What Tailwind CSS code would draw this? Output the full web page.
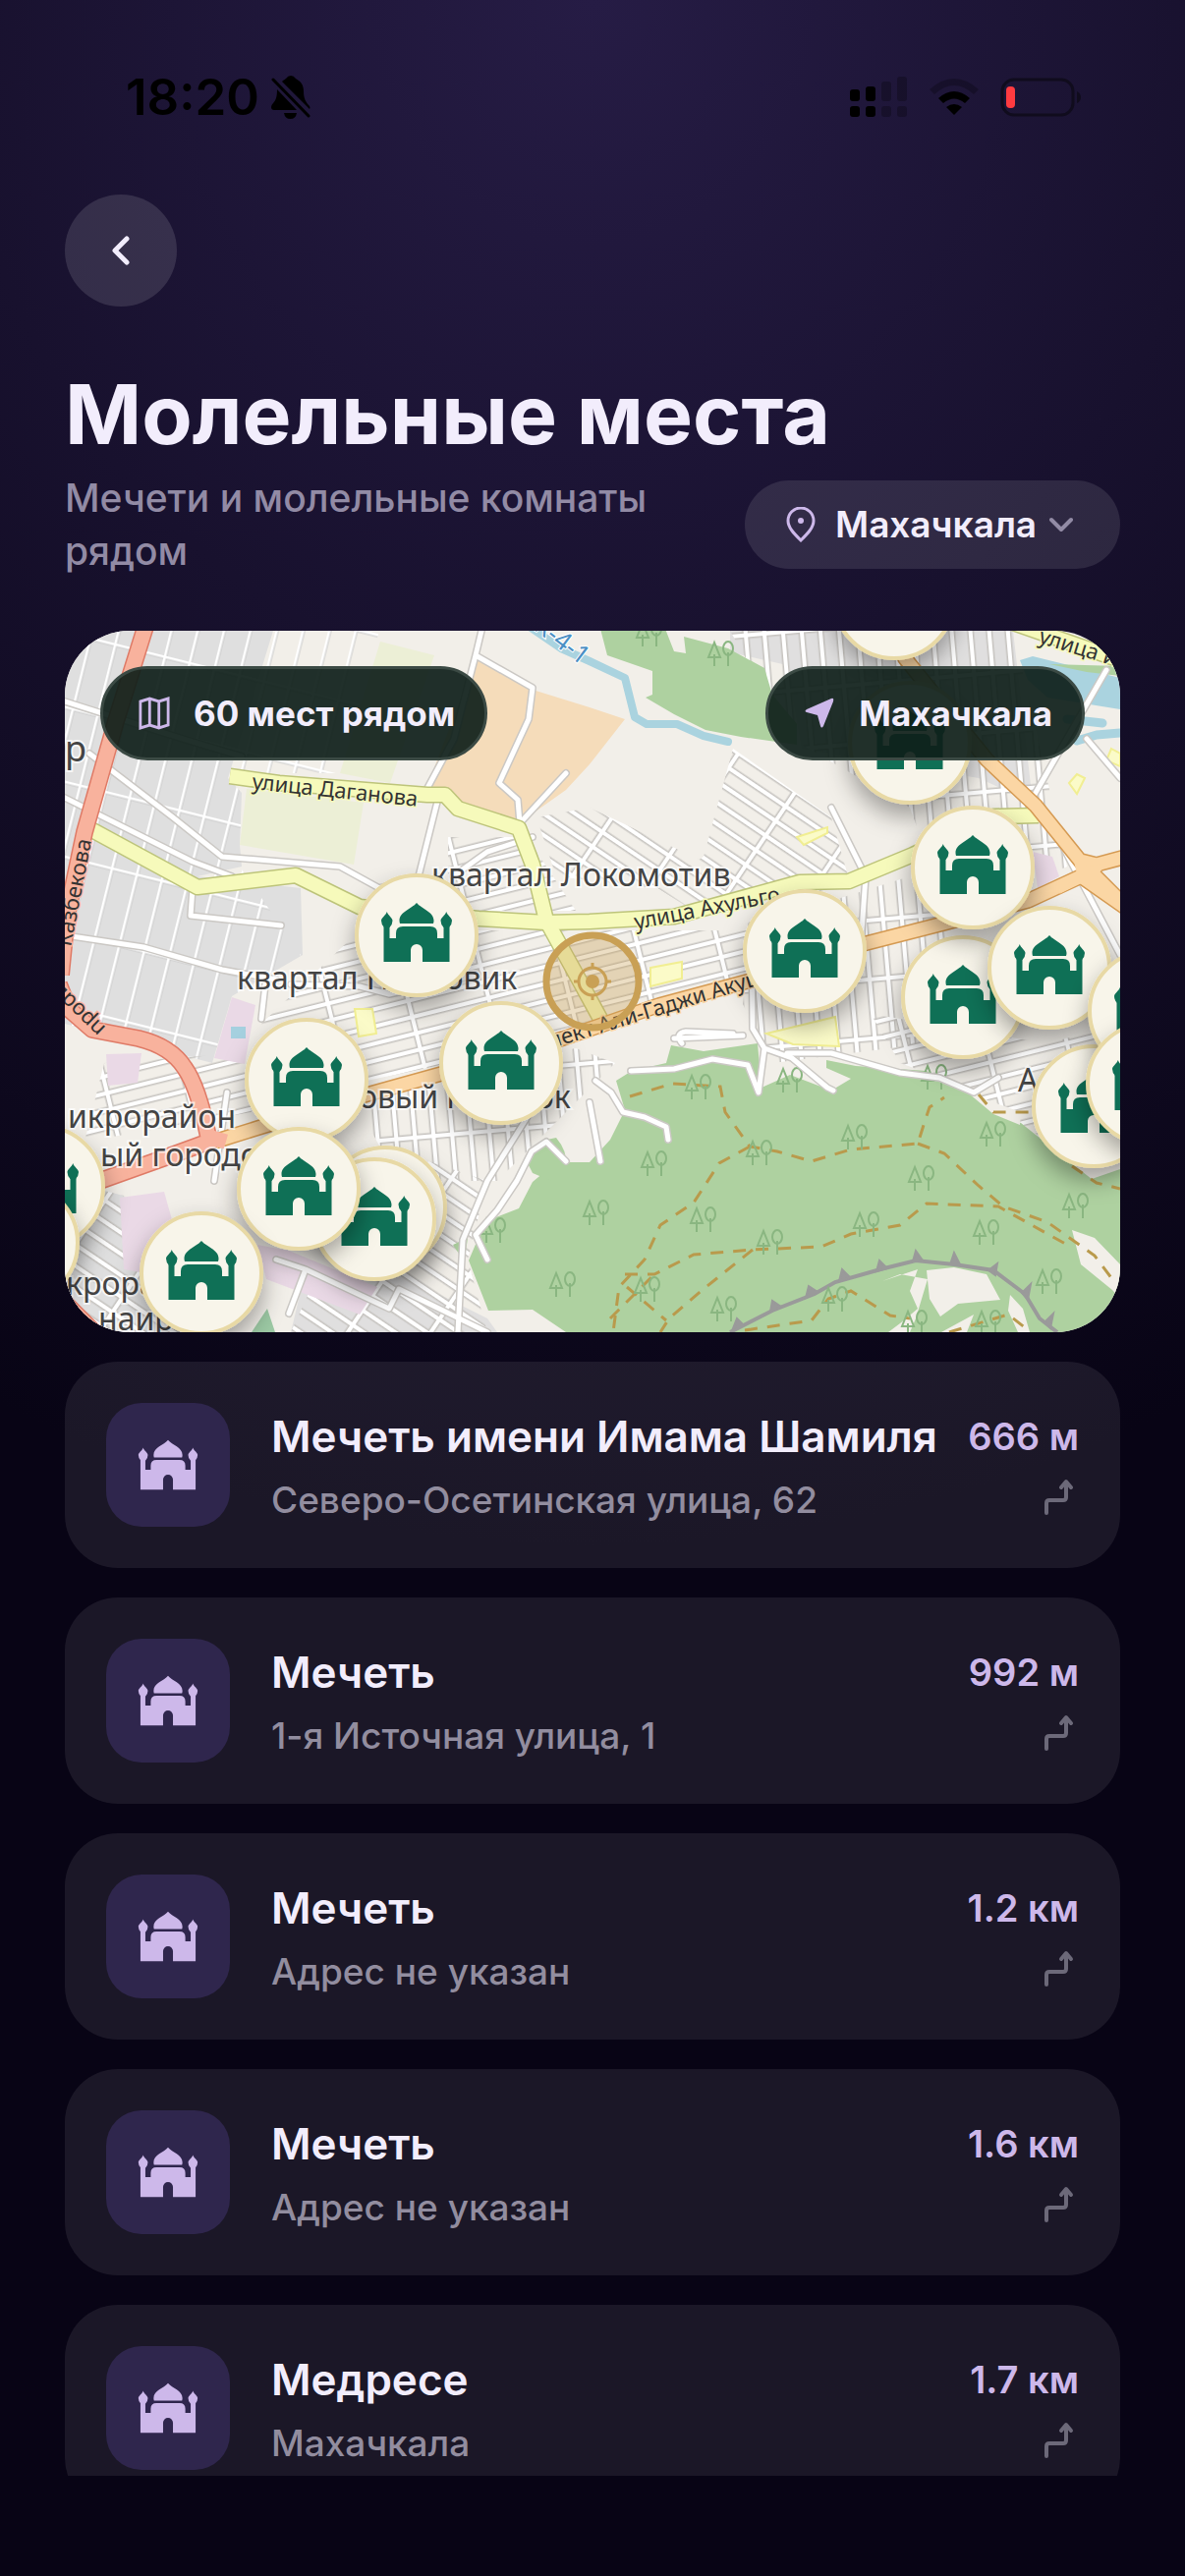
<!DOCTYPE html>
<html lang="ru">

<head>
  <meta charset="UTF-8" />
  <meta name="viewport" content="width=device-width, initial-scale=1.0" />
  <title>Молельные места</title>
  <script src="https://cdn.jsdelivr.net/npm/@tailwindcss/browser@4"></script>
</head>

<body class="h-screen overflow-hidden flex flex-col px-[66px] pb-[102px] text-[#f2edfc] font-['Inter',sans-serif] bg-[#080415] bg-[radial-gradient(120%_60%_at_50%_0%,#261c45_0%,#18112e_45%,#080415_100%)]">

  <!-- Shared icons -->
  <svg class="hidden">
    <symbol id="mosque" viewBox="-37 -34 74 62">
      <path d="M0-33C5-27 17.500-24 17.500-15Q17.500-13.500 17-12H-17Q-17.500-13.500-17.500-15C-17.500-24-5-27 0-33Z" />
      <path d="M-33.500 27V-9H-27.500V3H-21V-2Q-21-9-14-9H14Q21-9 21-2V3H27.500V-9H33.500V27H6V15A6 6 0 0 0-6 15V27Z" />
      <path d="M-30.200-24C-29-20-24.500-18-24.500-15Q-24.500-11-27.500-8H-33Q-36-11-36-15C-36-18-31.500-20-30.200-24Z" />
      <path d="M30.200-24C29-20 24.500-18 24.500-15Q24.500-11 27.500-8H33Q36-11 36-15C36-18 31.500-20 30.200-24Z" />
    </symbol>
    <symbol id="route" viewBox="0 0 32 38">
      <path d="M3 35V25Q3 22 6 22H20Q23 22 23 19V4M18 9L23 3L28 9" fill="none" stroke="currentColor" stroke-width="4" stroke-linecap="round" stroke-linejoin="round" />
    </symbol>
  </svg>

  <!-- Status bar -->
  <div class="flex items-center justify-between h-[198px] shrink-0 pl-[62px] pr-[38px] text-black">
    <div class="flex items-center gap-3">
      <span class="text-[51px] leading-[60px] font-semibold">18:20</span>
      <svg class="w-10 h-11" viewBox="0 0 40 44" fill="currentColor">
        <path d="M11 6C13 4 14 4 15 3Q17 0 20 0Q23 0 25 3C30 6 33 9 33 16C33 23 35 27 39 31Q40 33 39 34Z" />
        <path d="M6 14L26 35H3Q0 35 0 32Q0 30 2 28C5 25 6 21 6 14Z" />
        <path d="M13 38H26Q25 44 19.500 44Q14 44 13 38Z" />
        <path d="M2 4L38 41" stroke="currentColor" stroke-width="3" stroke-linecap="round" />
      </svg>
    </div>
    <div class="flex items-center gap-[22px]">
      <svg class="w-[59px] h-[42px]" viewBox="0 0 59 42">
        <rect x="0" y="13" width="10" height="12" rx="3" />
        <rect x="16" y="10" width="10" height="15" rx="3" />
        <rect x="0" y="30" width="10" height="11" rx="3" />
        <rect x="16" y="30" width="10" height="11" rx="3" />
        <g opacity=".25">
          <rect x="32" y="5" width="10" height="20" rx="3" />
          <rect x="48" y="0" width="10" height="25" rx="3" />
          <rect x="32" y="30" width="10" height="11" rx="3" />
          <rect x="48" y="30" width="10" height="11" rx="3" />
        </g>
      </svg>
      <svg class="w-[50px] h-[38px]" viewBox="0 0 50 38">
        <path d="M0 11Q25-11 50 11L45 16Q25-2 5 16Z" opacity=".25" />
        <path d="M9 20Q25 6 41 20L36 25Q25 16 14 25Z" />
        <path d="M17 29Q25 23 33 29L25 37Z" />
      </svg>
      <svg class="w-[84px] h-10" viewBox="0 0 84 40">
        <rect x="2" y="2" width="72" height="36" rx="12" fill="none" stroke="#100c1d" stroke-width="3" />
        <path d="M78 14Q82 16 82 20Q82 24 78 26Z" fill="#100c1d" />
        <rect x="6" y="9" width="9" height="22" rx="4" fill="#ff3b40" />
      </svg>
    </div>
  </div>

  <header class="shrink-0">
    <button aria-label="Назад" class="flex items-center justify-center size-[114px] rounded-full bg-white/12">
      <svg class="w-5 h-8" viewBox="0 0 20 32" fill="none" stroke="currentColor" stroke-width="5" stroke-linecap="round" stroke-linejoin="round">
        <path d="M16 4L4 16L16 28" />
      </svg>
    </button>
    <h1 class="mt-[60px] text-[84px] leading-[100px] font-bold">Молельные места</h1>
    <div class="flex items-center justify-between gap-6 mt-2">
      <p class="text-[39px] leading-[54px] font-medium text-[#928ba5]">Мечети и молельные комнаты рядом</p>
      <label class="flex items-center shrink-0 h-[90px] pl-[42px] pr-12 rounded-full bg-white/10">
        <svg class="w-[30px] h-9" viewBox="0 0 30 36" fill="none" stroke="#cdb8ea" stroke-width="3">
          <path d="M15 34C8 27 2 21 2 14A13 13 0 0 1 28 14C28 21 22 27 15 34Z" />
          <circle cx="15" cy="14" r="3" fill="#cdb8ea" stroke="none" />
        </svg>
        <select aria-label="Город" class="appearance-none ml-5 mr-3 text-[37px] leading-[48px] font-semibold">
          <option>Махачкала</option>
        </select>
        <svg class="w-6 h-4" viewBox="0 0 24 16" fill="none" stroke="#928ba5" stroke-width="4" stroke-linecap="round" stroke-linejoin="round">
          <path d="M2 3L12 13L22 3" />
        </svg>
      </label>
    </div>
  </header>

  <!-- Map -->
  <section class="relative shrink-0 mt-[54px] overflow-hidden rounded-[66px]">
    <svg class="block w-full font-['Noto_Sans',sans-serif]" viewBox="0 0 1074 714">
      <defs>
        <pattern id="blocks" width="26" height="74" patternUnits="userSpaceOnUse" patternTransform="rotate(14)">
          <path d="M0 0H26M0 0V74" fill="none" stroke="#c9c9c9" stroke-width="7" />
          <path d="M0 0H26M0 0V74" fill="none" stroke="#fff" stroke-width="5" />
        </pattern>
        <pattern id="lanes" width="80" height="17" patternUnits="userSpaceOnUse" patternTransform="rotate(-14)">
          <path d="M0 8H80M8 0V17" fill="none" stroke="#c6c3bf" stroke-width="7" />
          <path d="M0 8H80M8 0V17" fill="none" stroke="#fff" stroke-width="4" />
        </pattern>
        <pattern id="slope" width="70" height="18" patternUnits="userSpaceOnUse" patternTransform="rotate(34)">
          <path d="M0 8H70M8 0V18" fill="none" stroke="#c6c3bf" stroke-width="7" />
          <path d="M0 8H70M8 0V18" fill="none" stroke="#fff" stroke-width="4" />
        </pattern>
        <pattern id="upright" width="19" height="60" patternUnits="userSpaceOnUse" patternTransform="rotate(-5)">
          <path d="M0 5H19M6 0V60" fill="none" stroke="#c6c3bf" stroke-width="7" />
          <path d="M0 5H19M6 0V60" fill="none" stroke="#fff" stroke-width="4" />
        </pattern>
        <g id="trees" fill="none" stroke="#8ab681" stroke-width="2">
          <path d="M-7 12V0M-7-12L-13 3H-1Z" />
          <path d="M7 12V-2" />
          <ellipse cx="7" cy="-6" rx="5" ry="7" />
        </g>
        <filter id="shade" x="-50%" y="-50%" width="200%" height="200%">
          <feDropShadow dx="0" dy="12" stdDeviation="12" flood-color="#000" flood-opacity=".35" />
        </filter>
        <g id="pin">
          <circle r="61" fill="#f8f5ea" stroke="#e8d9a5" stroke-width="4" filter="url(#shade)" />
          <use href="#mosque" x="-37" y="-34" width="74" height="62" fill="#0f7056" />
        </g>
      </defs>

      <!-- Land use -->
      <rect width="1074" height="714" fill="#f2efe9" />
      <path d="M0 0H212L166 150L180 165L178 218L180 240L135 250L240 262L242 330L170 372L150 440L0 400Z" fill="#dfdfdf" />
      <path d="M677 0H965L985 175L930 150L750 120L735 35L677 22Z" fill="#e0dfdf" />
      <path d="M0 560L60 575L90 660L140 714H0Z" fill="#dfdfdf" />
      <path d="M230 714L240 672L330 650L430 700L440 714Z" fill="#e0dfdf" />
      <path d="M0 0H212L166 150L180 165L178 240L240 330L170 372L150 440L0 400Z" fill="url(#blocks)" />
      <path d="M212 0H320L280 145H166Z" fill="url(#blocks)" />
      <path d="M677 0H965L1020 240L900 290L860 180L740 110Z" fill="url(#upright)" />
      <path d="M680 120L780 190L800 260L640 285L600 260L650 230Z" fill="url(#slope)" />
      <path d="M534 180L650 235L600 262L500 250L480 190Z" fill="url(#slope)" />
      <path d="M300 305H760V345L560 400L440 430L250 470L200 400Z" fill="url(#lanes)" />
      <path d="M390 210L470 210L520 285H330L390 250Z" fill="url(#lanes)" />
      <path d="M700 300L860 250L900 300L880 420L720 440L690 380Z" fill="url(#upright)" />
      <path d="M820 390L1000 420L1074 400V540L1000 520L920 465L850 440Z" fill="url(#lanes)" />
      <path d="M40 440L180 430L190 490L20 520Z" fill="url(#lanes)" />
      <path d="M290 470L520 425L560 440L440 560L340 560Z" fill="url(#upright)" />
      <path d="M0 560L60 575L90 660L140 714H0Z" fill="url(#slope)" />
      <path d="M370 540L430 560L410 640L430 714H230L250 670L330 650Z" fill="url(#slope)" />
      <path d="M321 11L376 25L331 155L280 145Z" fill="#ecefd6" />
      <path d="M185 161L304 175L294 238L178 218Z" fill="#ecefd6" />
      <path d="M419 28L476 60L534 78L570 90L534 136L510 162L462 196L400 174L368 160Z" fill="#f5dcba" />
      <g fill="#ead9e6">
        <path d="M170 373L194 381L183 441L152 435Z" />
        <path d="M42 431L78 430L74 460L44 463Z" />
        <path d="M56 577L101 571L112 610L88 655L60 650Z" />
        <path d="M196 625L228 631L318 668L300 696L205 660Z" />
        <path d="M985 225L1005 230L1012 250L990 262Z" />
      </g>
      <g fill="#fbfbc8" stroke="#f1ee92" stroke-width="2">
        <path d="M295 385H313L317 410L299 413Z" />
        <path d="M714 410L784 393L788 423L741 421Z" />
        <path d="M596 343L628 337V354L596 362Z" />
        <path d="M745 210L776 200V206L752 218Z" />
        <path d="M1022 155L1030 146L1038 150L1030 166Z" />
        <path d="M1065 120L1074 125V138L1060 132Z" />
      </g>
      <rect x="169" y="403" width="15" height="12" fill="#a5d0df" />

      <!-- Park -->
      <path d="M545-2H611L620 21L632 23L630 6L675 18L712 38L720 65L745 95V116L688 108L652 101L620 85L591 68L598 65V41L552 25Z" fill="#aed1a0" />
      <path d="M510 714L476 691L431 692L411 641L428 601L462 588L476 561L500 541L534 541L555 518L570 488L561 458L577 448L612 440L617 422L650 428L705 420L709 465L738 452L780 468L800 456L775 445V437L805 443L877 448L920 471L945 488L973 501L1023 541L1045 558L1074 548V714Z" fill="#aed1a0" />
      <path d="M470 540Q475 520 500 516Q512 530 510 545L495 560L476 552Z" fill="#aed1a0" />
      <path d="M190 714L206 690L214 714Z" fill="#9cc9a4" />
      <path d="M395 625L410 618L408 632L403 637Z" fill="#aed1a0" />
      <g fill="#f2efe9">
        <path d="M1025 610L1048 618L1074 645V680L1066 671L1034 645Z" />
        <path d="M877 651L905 648L938 655L952 681L909 685L891 698L880 680Z" />
        <path d="M832 662L868 650L860 672L868 690L850 705L838 714H860L866 700L878 660L850 655Z" />
        <path d="M962 676L975 690L982 714H970L960 692Z" />
        <path d="M892 714L925 696L918 714Z" />
        <path d="M920 471L973 490L972 503L945 492Z" />
      </g>
      <g fill="none" stroke="#b99a4c" stroke-width="3" stroke-dasharray="13 10">
        <path d="M575 474L618 461L667 464L672 490L697 525L725 530L760 540L800 528L868 522L875 500L880 485L895 475" />
        <path d="M697 525L666 542L640 582L606 605L590 640L564 668L558 714" />
        <path d="M570 655L600 655L640 635L700 630L770 627L800 614L850 605L877 583L950 586L1020 625" />
        <path d="M868 522L895 532L930 565L955 586L1000 602L1048 636L1066 660" />
        <path d="M555 700L600 655M700 630L650 670L615 700L606 714M572 668L612 702" />
        <path d="M692 712L760 702L777 680L800 672L840 697L860 700M900 714L960 696L978 710" />
        <path d="M930 472L945 490L985 490M1025 545L1050 562L1074 568" />
      </g>
      <g fill="none" stroke="#9a9a9a" stroke-width="4">
        <path d="M677 714L720 692L763 675L784 663L830 650L866 641L905 645L945 651L977 675L992 700L1010 714" />
      </g>
      <path d="M680 710L684 700L690 706ZM718 693L720 682L729 688ZM754 679L757 667L766 673ZM788 662L791 650L799 658ZM826 652L829 641L837 649ZM863 642L866 631L873 641ZM901 645L905 633L911 645ZM940 651L949 644L947 656ZM974 674L983 665L980 681ZM997 704L1006 695L1003 710Z" fill="#9a9a9a" stroke="#9a9a9a" stroke-width="2" />
      <use href="#trees" x="645" y="465" />
      <use href="#trees" x="738" y="458" />
      <use href="#trees" x="885" y="455" />
      <use href="#trees" x="600" y="543" />
      <use href="#trees" x="707" y="532" />
      <use href="#trees" x="804" y="516" />
      <use href="#trees" x="945" y="513" />
      <use href="#trees" x="872" y="558" />
      <use href="#trees" x="650" y="600" />
      <use href="#trees" x="718" y="623" />
      <use href="#trees" x="816" y="605" />
      <use href="#trees" x="938" y="613" />
      <use href="#trees" x="1029" y="586" />
      <use href="#trees" x="1002" y="663" />
      <use href="#trees" x="593" y="671" />
      <use href="#trees" x="671" y="691" />
      <use href="#trees" x="784" y="681" />
      <use href="#trees" x="541" y="593" />
      <use href="#trees" x="436" y="611" />
      <use href="#trees" x="507" y="666" />
      <use href="#trees" x="865" y="705" />
      <use href="#trees" x="940" y="705" />
      <use href="#trees" x="595" y="4" />
      <use href="#trees" x="668" y="24" />

      <!-- Water -->
      <path d="M972 30L985 26L1074 48V80L1000 68L980 50Z" fill="#aad3df" />
      <path d="M1002 34L1074 36V46L1040 42Z" fill="#aed1a0" />
      <g fill="none" stroke="#aad3df" stroke-linecap="round" stroke-linejoin="round">
        <path d="M470-6L505 18L534 31L570 48L580 88L592 95L623 95L650 107L675 113" stroke-width="8" />
        <path d="M1030 112L1050 106L1074 104" stroke-width="9" />
        <path d="M1020 90L1056 94" stroke-width="9" />
      </g>

      <!-- Minor streets -->
      <g fill="none" stroke-linejoin="round" stroke-linecap="round">
        <g stroke="#cbc8c4" stroke-width="8">
          <path d="M424 0L418 25L396 110L368 162M418 25L476 58L472 90L442 155L461 172L463 196L510 145" />
          <path d="M0 72L120 110L180 128M0 170L130 235L170 250M0 310L80 322L160 345L215 355M25 125L110 190L160 230L280 240L320 262M130 262L128 290L220 300" />
          <path d="M576 448L620 446L659 436L695 442L706 470L712 425L700 405L699 300M712 425L740 435L776 465L782 468M735 430L780 430L850 450L890 455L925 470L950 455" />
          <path d="M540 458L556 470L568 490L590 495L612 505L614 518M534 480L545 540" />
          <path d="M620 415L690 412M628 420Q620 410 632 408L680 410" />
          <path d="M430 640L418 615L440 590L460 560L475 530L490 520L510 540M400 714L405 620L430 560L480 480" />
          <path d="M780 180L815 250L810 320M985 170L1060 40M1040 110L1074 150M1000 190L1074 330" />
          <path d="M230 360L300 362L330 370L420 350M200 395L204 360M165 470L152 560" />
          <path d="M228 695L245 650L215 640M245 650L330 690L340 670L430 714" />
          <path d="M380 170L360 250L320 262M395 250L430 225L476 210" />
        </g>
        <g stroke="#fff" stroke-width="5">
          <path d="M424 0L418 25L396 110L368 162M418 25L476 58L472 90L442 155L461 172L463 196L510 145" />
          <path d="M0 72L120 110L180 128M0 170L130 235L170 250M0 310L80 322L160 345L215 355M25 125L110 190L160 230L280 240L320 262M130 262L128 290L220 300" />
          <path d="M576 448L620 446L659 436L695 442L706 470L712 425L700 405L699 300M712 425L740 435L776 465L782 468M735 430L780 430L850 450L890 455L925 470L950 455" />
          <path d="M540 458L556 470L568 490L590 495L612 505L614 518M534 480L545 540" />
          <path d="M620 415L690 412M628 420Q620 410 632 408L680 410" />
          <path d="M430 640L418 615L440 590L460 560L475 530L490 520L510 540M400 714L405 620L430 560L480 480" />
          <path d="M780 180L815 250L810 320M985 170L1060 40M1040 110L1074 150M1000 190L1074 330" />
          <path d="M230 360L300 362L330 370L420 350M200 395L204 360M165 470L152 560" />
          <path d="M228 695L245 650L215 640M245 650L330 690L340 670L430 714" />
          <path d="M380 170L360 250L320 262M395 250L430 225L476 210" />
        </g>
      </g>

      <!-- Main roads -->
      <g fill="none" stroke-linejoin="round">
        <g stroke="#bdc47a" stroke-width="17">
          <path d="M168 148L218 155L369 167L387 167L400 181L462 201L476 238L490 295L521 351L545 395" />
          <path d="M28 203L135 261L235 249L300 281L421 293L490 297L534 296L620 291L748 256L798 255L863 228L945 189L991 188" />
          <path d="M965-8L1074 30" />
        </g>
        <g stroke="#f6fabb" stroke-width="14">
          <path d="M168 148L218 155L369 167L387 167L400 181L462 201L476 238L490 295L521 351L545 395" />
          <path d="M28 203L135 261L235 249L300 281L421 293L490 297L534 296L620 291L748 256L798 255L863 228L945 189L991 188" />
          <path d="M965-8L1074 30" />
        </g>
        <g stroke="#d59a52" stroke-width="16">
          <path d="M152 520L200 505L311 471L383 451L507 415L605 381L698 356L816 318L898 297L980 275L1034 250L1084 285" />
          <path d="M845 0L855 28L938 131L988 178L1034 235L1084 285M1030 233L1050 238L1080 230" />
        </g>
        <g stroke="#fbd6a4" stroke-width="13">
          <path d="M152 520L200 505L311 471L383 451L507 415L605 381L698 356L816 318L898 297L980 275L1034 250L1084 285" />
          <path d="M845 0L855 28L938 131L988 178L1034 235L1084 285M1030 233L1050 238L1080 230" />
        </g>
        <path d="M1025 225L1040 240L1060 237L1050 250L1074 275L1060 272L1036 256L1012 268L1030 248Z" fill="#fbd6a4" />
        <g stroke="#df7a66" stroke-width="18">
          <path d="M82-4L52 92L20 205L2 290L-4 350M-6 360L4 385L28 406L75 415Q108 423 122 445Q136 465 146 515M152 518L100 537L30 562M-4 680L30 714" />
        </g>
        <g stroke="#f8b29d" stroke-width="15">
          <path d="M82-4L52 92L20 205L2 290L-4 350M-6 360L4 385L28 406L75 415Q108 423 122 445Q136 465 146 515L164 520M152 518L100 537L30 562M-4 680L30 714" />
        </g>
      </g>

      <!-- Labels -->
      <g fill="#444" stroke="#fff" stroke-opacity=".7" stroke-width="4" paint-order="stroke" font-size="32">
        <text x="0" y="133" font-size="36">р</text>
        <text x="373" y="260">квартал Локомотив</text>
        <text x="175" y="365">квартал Плановик</text>
        <text x="299" y="486">овый посёлок</text>
        <text x="3" y="506">икрорайон</text>
        <text x="36" y="545">ый городок</text>
        <text x="1" y="676">крорайон</text>
        <text x="34" y="712">наир</text>
        <text x="970" y="469">А</text>
      </g>
      <g fill="#333" stroke-width="3" paint-order="stroke" font-size="22">
        <text transform="translate(190 161) rotate(6)" stroke="#f6fabb">улица Даганова</text>
        <text transform="translate(581 304) rotate(-11)" stroke="#f6fabb">улица Ахульго</text>
        <text transform="translate(446 440) rotate(-17)" stroke="#fbd6a4">проспект Али-Гаджи Акушинского</text>
        <text transform="translate(6 322) rotate(-79)" stroke="#f8b29d">Казбекова</text>
        <text transform="translate(-14 366) rotate(44)" stroke="#f8b29d">проdu</text>
        <text transform="translate(990 12) rotate(17)" stroke="#f6fabb">улица Ирчи</text>
      </g>
      <text transform="translate(476 -2) rotate(37)" fill="#4b8fc4" stroke="#fff" stroke-width="2" paint-order="stroke" font-size="26">К-4-1</text>

      <!-- Current position -->
      <g transform="translate(537 357)" fill="none" stroke="#c9a055">
        <circle r="47" fill="#c9a055" fill-opacity=".35" stroke-width="7" />
        <circle r="14" stroke-width="3" />
        <path d="M0-19V-14M0 19V14M-19 0H-14M19 0H14" stroke-width="3" />
        <circle r="7" fill="#c9a055" stroke="none" />
      </g>

      <!-- Places -->
      <use href="#pin" x="844" y="-33" />
      <use href="#pin" x="860" y="114" />
      <use href="#pin" x="358" y="310" />
      <use href="#pin" x="246" y="457" />
      <use href="#pin" x="444" y="440" />
      <use href="#pin" x="326" y="587" />
      <use href="#pin" x="315" y="599" />
      <use href="#pin" x="238" y="568" />
      <use href="#pin" x="-22" y="566" />
      <use href="#pin" x="-48" y="623" />
      <use href="#pin" x="139" y="654" />
      <use href="#pin" x="753" y="326" />
      <use href="#pin" x="914" y="373" />
      <use href="#pin" x="924" y="241" />
      <use href="#pin" x="1002" y="343" />
      <use href="#pin" x="1047" y="484" />
      <use href="#pin" x="1104" y="387" />
      <use href="#pin" x="1102" y="461" />
    </svg>

    <div class="absolute top-9 inset-x-9 flex items-center justify-between text-[35px] leading-[48px] font-bold">
      <div class="flex items-center gap-6 h-24 pl-9 pr-[30px] rounded-full border-3 border-[#3b4a44] bg-[#0e1e19]/92">
        <svg class="w-8 h-[34px]" viewBox="0 0 34 34" preserveAspectRatio="none" fill="none" stroke="#cdb8ea" stroke-width="3">
          <path d="M2 5L12 2L22 5L32 2V29L22 32L12 29L2 32ZM12 2V29M22 5V32" />
        </svg>
        60 мест рядом
      </div>
      <button class="flex items-center gap-6 h-24 pl-9 pr-[30px] rounded-full border-3 border-[#3b4a44] bg-[#0e1e19]/92">
        <svg class="w-8 h-8" viewBox="0 0 32 32" fill="#cdb8ea">
          <path d="M28 1Q31 0 30 4L20 29Q18 32 17 29L14 18L3 15Q0 14 3 12Z" />
        </svg>
        Махачкала
      </button>
    </div>
  </section>

  <ul id="placeList" class="flex-1 min-h-0 overflow-hidden mt-[30px] space-y-[30px]"></ul>

  <script>
    const places = [
      { title: "Мечеть имени Имама Шамиля", address: "Северо-Осетинская улица, 62", distance: "666 м" },
      { title: "Мечеть", address: "1-я Источная улица, 1", distance: "992 м" },
      { title: "Мечеть", address: "Адрес не указан", distance: "1.2 км" },
      { title: "Мечеть", address: "Адрес не указан", distance: "1.6 км" },
      { title: "Медресе", address: "Махачкала", distance: "1.7 км" },
    ];

    const list = document.getElementById("placeList");

    places.forEach(place => {
      const li = document.createElement("li");
      li.innerHTML = `
        <a href="#" class="flex items-center gap-[42px] p-[42px] rounded-[54px] bg-white/8">
          <span class="flex items-center justify-center shrink-0 size-[126px] rounded-[36px] bg-[#2f264d]">
            <svg class="w-[62px] h-[52px] fill-[#cdb8ea]"><use href="#mosque" /></svg>
          </span>
          <span class="flex-1 min-w-0 pt-1">
            <span class="block whitespace-nowrap text-[44px] leading-[60px] font-semibold">${place.title}</span>
            <span class="block whitespace-nowrap mt-2 text-[37px] leading-[54px] font-medium text-[#928d9f]">${place.address}</span>
          </span>
          <span class="flex flex-col items-end shrink-0 gap-4 pb-1">
            <span class="text-[38px] leading-[54px] font-semibold text-[#cdb8ea]">${place.distance}</span>
            <svg class="w-8 h-[38px] mr-1 text-[#6c6979]"><use href="#route" /></svg>
          </span>
        </a>
      `;
      list.appendChild(li);
    });
  </script>
</body>

</html>
